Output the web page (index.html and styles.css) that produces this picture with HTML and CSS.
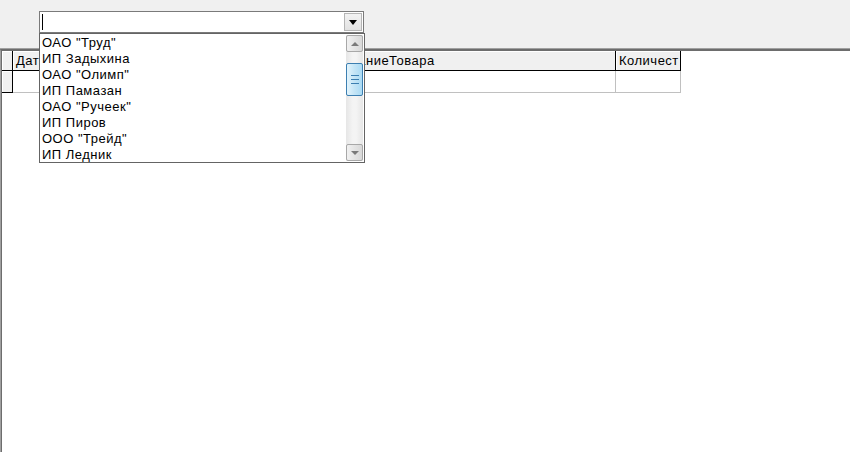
FILE: index.html
```html
<!DOCTYPE html>
<html>
<head>
<meta charset="utf-8">
<link rel="stylesheet" href="styles.css">
</head>
<body>
<div class="toolbar">
  <div class="combo">
    <div class="combo-edit"><span class="caret"></span></div>
    <div class="combo-btn"><span class="arrow-down"></span></div>
    <div class="droplist">
      <ul class="items">
        <li>ОАО "Труд"</li>
        <li>ИП Задыхина</li>
        <li>ОАО "Олимп"</li>
        <li>ИП Памазан</li>
        <li>ОАО "Ручеек"</li>
        <li>ИП Пиров</li>
        <li>ООО "Трейд"</li>
        <li>ИП Ледник</li>
      </ul>
      <div class="vscroll">
        <div class="sb-btn"><span class="sb-up"></span></div>
        <div class="sb-track">
          <div class="sb-thumb"><span class="grip"></span><span class="grip"></span><span class="grip"></span></div>
        </div>
        <div class="sb-btn"><span class="sb-down"></span></div>
      </div>
    </div>
  </div>
</div>
<div class="content">
  <div class="grid">
    <div class="hcell ind"></div>
    <div class="hcell">Дата</div>
    <div class="hcell">НаименованиеТовара</div>
    <div class="hcell">Количест</div>
    <div class="dcell ind"></div>
    <div class="dcell"></div>
    <div class="dcell"></div>
    <div class="dcell"></div>
  </div>
</div>
</body>
</html>
```
FILE: styles.css
```css
html, body {
  margin: 0;
  padding: 0;
}
body {
  width: 850px;
  height: 452px;
  overflow: hidden;
  background: #ffffff;
  font-family: "Liberation Sans", Arial, sans-serif;
  font-size: 13px;
  letter-spacing: 0.5px;
  color: #000;
  display: flex;
  flex-direction: column;
}
.toolbar {
  height: 49px;
  box-sizing: border-box;
  background: #f0f0f0;
  border-bottom: 1px solid #a0a0a0;
  padding: 11px 0 0 39px;
  flex: none;
}
.combo {
  position: relative;
  width: 325px;
  height: 22px;
  box-sizing: border-box;
  border: 1px solid #7a7a7a;
  background: #fff;
  display: flex;
  align-items: center;
}
.combo-edit {
  flex: 1;
  height: 100%;
  display: flex;
  align-items: center;
  padding-left: 2px;
}
.caret {
  display: block;
  width: 1px;
  height: 16px;
  background: #000;
}
.combo-btn {
  width: 18px;
  height: 18px;
  margin-right: 1px;
  box-sizing: border-box;
  border: 1px solid #b5b5b5;
  background: linear-gradient(#f2f2f2, #e2e2e2);
  display: flex;
  align-items: center;
  justify-content: center;
}
.arrow-down {
  width: 0;
  height: 0;
  border-left: 4px solid transparent;
  border-right: 4px solid transparent;
  border-top: 5px solid #000;
  margin-top: 1px;
}
.droplist {
  position: absolute;
  left: -1px;
  top: 21px;
  width: 326px;
  height: 130px;
  box-sizing: border-box;
  border: 1px solid #646464;
  background: #fff;
  display: flex;
  z-index: 5;
}
.items {
  list-style: none;
  margin: 0;
  padding: 1px 0 0 2px;
  flex: 1;
}
.items li {
  height: 16px;
  line-height: 16px;
  white-space: nowrap;
}
.vscroll {
  width: 17px;
  margin: 1px 1px 1px 0;
  background: linear-gradient(90deg, #e6e6e6, #f4f4f4 40%, #f4f4f4 60%, #e6e6e6);
  display: flex;
  flex-direction: column;
}
.sb-btn {
  height: 17px;
  box-sizing: border-box;
  border: 1px solid #a8a8a8;
  border-radius: 2px;
  background: linear-gradient(90deg, #f1f1f1, #e4e4e4 50%, #d8d8d8);
  display: flex;
  align-items: center;
  justify-content: center;
  flex: none;
}
.sb-up {
  width: 0;
  height: 0;
  border-left: 4px solid transparent;
  border-right: 4px solid transparent;
  border-bottom: 4px solid #7a7a7a;
}
.sb-down {
  width: 0;
  height: 0;
  border-left: 4px solid transparent;
  border-right: 4px solid transparent;
  border-top: 4px solid #7a7a7a;
}
.sb-track {
  flex: 1;
  padding-top: 11px;
}
.sb-thumb {
  height: 33px;
  box-sizing: border-box;
  border: 1px solid #3c7fb1;
  border-radius: 2px;
  background: linear-gradient(90deg, #e3f4fc, #c4e5f6 50%, #a9daf4);
  display: flex;
  flex-direction: column;
  align-items: center;
  justify-content: center;
  gap: 3px;
}
.grip {
  display: block;
  width: 8px;
  height: 1px;
  background: #3c7fb1;
}
.content {
  flex: 1;
  border-top: 2px solid #6d6d6d;
  border-left: 1px solid #a0a0a0;
  box-shadow: inset 1px 0 0 #6d6d6d;
  padding-left: 1px;
}
.grid {
  display: grid;
  grid-template-columns: 11px 277px 326px 65px;
  grid-template-rows: 20px 22px;
  width: 679px;
}
.hcell {
  box-sizing: border-box;
  background: #f0f0f0;
  border-right: 1px solid #000;
  border-bottom: 1px solid #000;
  box-shadow: inset 1px 1px 0 #fff;
  padding-left: 3px;
  line-height: 19px;
  white-space: nowrap;
  overflow: hidden;
}
.hcell.ind {
  padding: 0;
}
.dcell {
  box-sizing: border-box;
  background: #fff;
  border-right: 1px solid #c0c0c0;
  border-bottom: 1px solid #c0c0c0;
}
.dcell.ind {
  background: #f0f0f0;
  border-right: 1px solid #000;
  border-bottom: 1px solid #000;
  box-shadow: inset 1px 1px 0 #fff;
}
```
